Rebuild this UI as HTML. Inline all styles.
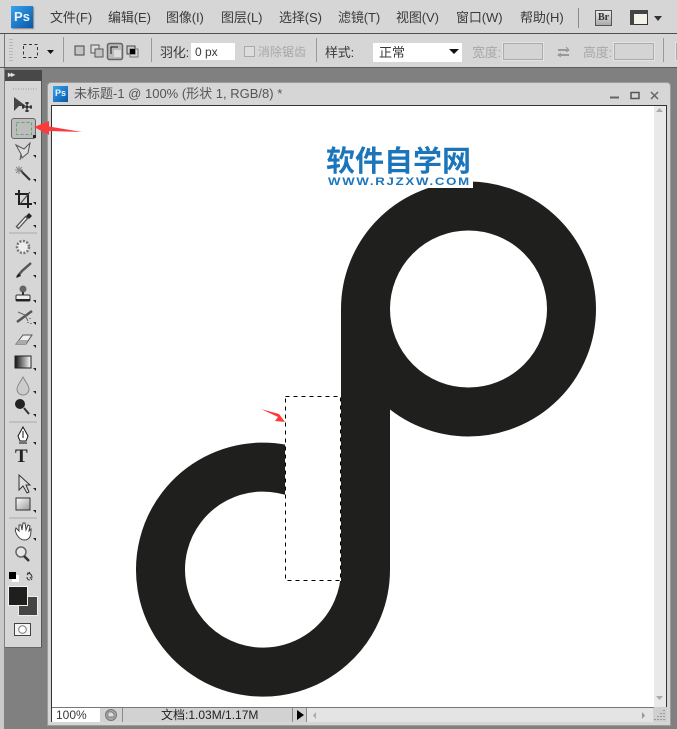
<!DOCTYPE html>
<html><head><meta charset="utf-8">
<style>
html,body{margin:0;padding:0}
body{width:677px;height:729px;overflow:hidden;position:relative;background:#808080;font-family:"Liberation Sans","Noto Sans CJK SC",sans-serif;font-size:13px;color:#3a3a3a}
.a{position:absolute}
.t{position:absolute;white-space:nowrap;line-height:16px}
.g{color:#a8a8a8}
.inp{position:absolute;box-sizing:border-box;background:#d4d4d4;border:1px solid #ababab;box-shadow:0 0 0 1px #e4e4e4}
svg{position:absolute;left:0;top:0;overflow:visible}
</style></head><body>
<!-- menu -->
<div class="a" style="left:0;top:0;width:677px;height:33px;background:#d6d6d6"></div>
<div class="a" style="left:0;top:33px;width:677px;height:1px;background:#4e4e4e"></div>
<div class="a" style="left:0;top:34px;width:677px;height:34px;background:#d6d6d6"></div>
<div class="a" style="left:4px;top:34px;width:1px;height:34px;background:#777"></div>
<div class="a" style="left:0;top:67px;width:677px;height:1px;background:#5c5c5c"></div>
<div class="a" style="left:0;top:68px;width:4px;height:661px;background:#c9c9c9"></div>
<div class="a" style="left:11px;top:6px;width:22px;height:22px;background:linear-gradient(135deg,#35a4ee,#0a57a8);color:#e9f4fc;font:bold 13px/21px 'Liberation Sans',sans-serif;text-align:center;box-shadow:1px 1px 1px #888">Ps</div>
<div class="t" style="left:50px;top:10px;letter-spacing:-.1px">文件(F)</div>
<div class="t" style="left:108px;top:10px;letter-spacing:-.1px">编辑(E)</div>
<div class="t" style="left:166px;top:10px;letter-spacing:-.1px">图像(I)</div>
<div class="t" style="left:221px;top:10px;letter-spacing:-.1px">图层(L)</div>
<div class="t" style="left:279px;top:10px;letter-spacing:-.1px">选择(S)</div>
<div class="t" style="left:338px;top:10px;letter-spacing:-.1px">滤镜(T)</div>
<div class="t" style="left:396px;top:10px;letter-spacing:-.1px">视图(V)</div>
<div class="t" style="left:456px;top:10px;letter-spacing:-.1px">窗口(W)</div>
<div class="t" style="left:520px;top:10px;letter-spacing:-.1px">帮助(H)</div>
<div class="a" style="left:578px;top:8px;width:1px;height:20px;background:#8a8a8a"></div>
<div class="a" style="left:595px;top:10px;width:15px;height:14px;border:1px solid #555;background:linear-gradient(#e8e8e8,#aaa);font:bold 10px/14px 'Liberation Serif',serif;text-align:center;color:#333">Br</div>
<!-- options -->
<div class="t" style="left:160px;top:45px;letter-spacing:-.2px">羽化:</div>
<div class="a" style="left:191px;top:43px;width:44px;height:17px;background:#fff"></div>
<div class="t" style="left:195px;top:44px;font-size:12px">0 px</div>
<div class="a" style="left:244px;top:46px;width:9px;height:9px;border:1px solid #aaa;background:#ddd"></div>
<div class="t g" style="left:258px;top:44px;font-size:12px">消除锯齿</div>
<div class="t" style="left:325px;top:45px;letter-spacing:-.2px">样式:</div>
<div class="a" style="left:373px;top:43px;width:89px;height:19px;background:#fff"></div>
<div class="t" style="left:379px;top:45px">正常</div>
<div class="t g" style="left:472px;top:45px;letter-spacing:-.2px">宽度:</div>
<div class="inp" style="left:503px;top:43px;width:40px;height:17px"></div>
<div class="t g" style="left:583px;top:45px;letter-spacing:-.2px">高度:</div>
<div class="inp" style="left:614px;top:43px;width:40px;height:17px"></div>
<div class="inp" style="left:676px;top:43px;width:10px;height:17px"></div>
<!-- toolbar -->
<div class="a" style="left:5px;top:70px;width:37px;height:11px;background:#484848;color:#ddd;font:bold 8px/10px 'Liberation Sans',sans-serif;letter-spacing:-1px"><span style="margin-left:3px">▸▸</span></div>
<div class="a" style="left:5px;top:81px;width:36px;height:566px;background:#d6d6d6;border-right:1px solid #555"></div>
<div class="a" style="left:5px;top:647px;width:37px;height:1px;background:#666"></div>
<div class="a" style="left:11px;top:118px;width:23px;height:19px;background:#bdbdbd;border:1px solid #666;border-radius:3px"></div>
<div class="t" style="left:15px;top:447px;font:bold 19px/20px 'Liberation Serif',serif;color:#222">T</div>
<!-- document -->
<div class="a" style="left:48px;top:83px;width:622px;height:642px;background:#d6d6d6;border-radius:3px 3px 0 0;box-shadow:0 0 0 1px #9c9c9c"></div>
<div class="a" style="left:53px;top:86px;width:15px;height:16px;background:linear-gradient(135deg,#35a4ee,#0a57a8);color:#e9f4fc;font:bold 9px/15px 'Liberation Sans',sans-serif;text-align:center">Ps</div>
<div class="t" style="left:74px;top:86px;color:#555">未标题-1 @ 100% (形状 1, RGB/8) *</div>
<div class="a" style="left:51px;top:105px;width:616px;height:617px;background:#fff;border:1px solid #333;box-sizing:border-box"></div>
<div class="a" style="left:654px;top:106px;width:12px;height:601px;background:#e9e9e9"></div>
<div class="a" style="left:52px;top:707px;width:614px;height:15px;background:#d2d2d2;border-top:1px solid #777;box-sizing:border-box"></div>
<div class="a" style="left:52px;top:708px;width:48px;height:14px;background:#fff"></div>
<div class="t" style="left:56px;top:708px;font-size:12px;line-height:15px">100%</div>
<div class="a" style="left:122px;top:708px;width:1px;height:14px;background:#8a8a8a"></div>
<div class="a" style="left:292px;top:708px;width:1px;height:14px;background:#8a8a8a"></div>
<div class="a" style="left:306px;top:708px;width:1px;height:14px;background:#8a8a8a"></div>
<div class="a" style="left:307px;top:708px;width:346px;height:14px;background:#e4e4e4"></div>
<div class="t" style="left:161px;top:707px;font-size:12px;color:#222">文档:1.03M/1.17M</div>

<svg width="677" height="729" viewBox="0 0 677 729">
<defs><linearGradient id="gr"><stop offset="0" stop-color="#111"/><stop offset="1" stop-color="#fff"/></linearGradient>
<linearGradient id="sh" x1="0" y1="0" x2="1" y2="1"><stop offset="0" stop-color="#fff"/><stop offset="1" stop-color="#999"/></linearGradient></defs>
<!-- artwork -->
<g fill="none" stroke="#1f1f1e" stroke-width="49">
<circle cx="468.500" cy="309" r="103" stroke-width="49"/>
<path d="M365.500 309V570A102.500 102.500 0 1 1 300 474"/>
</g>
<rect x="285" y="396" width="56" height="185" fill="#fff"/>
<rect x="285.500" y="396.500" width="55" height="184" fill="none" stroke="#000" stroke-dasharray="4 4"/>
<!-- arrows -->
<path d="M34 127L49 121V126.500L82 132L49 131V135Z" fill="#fb3b3b"/>
<path d="M261 409L279 414L285 422L275 421L278 417Z" fill="#fb3b3b"/>
<!-- option icons -->
<rect x="23.500" y="44.500" width="14" height="13" fill="none" stroke="#333" stroke-dasharray="3 2.500"/>
<path d="M47 50h7l-3.500 4z" fill="#111"/>
<g stroke-dasharray="1 2" stroke="#999"><path d="M10 39V62M12 39V62" fill="none"/></g>
<path d="M63.500 37V62M151.500 38V62M316.500 38V62M663.500 38V62" stroke="#999"/>
<rect x="75" y="46" width="9" height="9" fill="#c4c4c4" stroke="#444"/>
<rect x="91" y="45" width="8" height="8" fill="#ddd" stroke="#555"/><rect x="95" y="49" width="8" height="8" fill="#c4c4c4" stroke="#555"/>
<rect x="107.500" y="43.500" width="15" height="16" rx="2" fill="#bbb" stroke="#666" stroke-width="1.500"/>
<path d="M111 54V47H118" fill="none" stroke="#111"/><rect x="114" y="50" width="7" height="7" fill="#ddd"/>
<rect x="127" y="46" width="8" height="8" fill="#ccc" stroke="#444"/><rect x="130" y="49" width="8" height="8" fill="none" stroke="#777"/><rect x="130" y="49" width="5" height="5" fill="#000"/>
<path d="M449 49h10l-5 5z" fill="#111"/>
<path d="M558 50h11M558 55h11" stroke="#999" stroke-width="2"/><path d="M566 47l3 3-3 2M561 53l-3 2 3 2" fill="none" stroke="#999"/>
<!-- film icon -->
<rect x="630.500" y="10.500" width="17" height="14" fill="#f4f1e8" stroke="#333"/>
<rect x="630" y="10" width="18" height="4" fill="#444"/><rect x="630" y="10" width="4" height="15" fill="#444"/>
<path d="M654 16h8l-4 5z" fill="#333"/>
<!-- doc buttons -->
<path d="M610 97.500h9" stroke="#666" stroke-width="2"/>
<rect x="631" y="92.500" width="8" height="6" fill="none" stroke="#555" stroke-width="1.500"/>
<path d="M651 92l7 7M658 92l-7 7" stroke="#666" stroke-width="1.500"/>
<!-- scroll arrows -->
<path d="M656 112h7l-3.500-4zM656 696h7l-3.500 4z" fill="#aaa"/>
<path d="M316 712v7l-3-3.500z" fill="#aaa"/>
<path d="M642 712v7l3-3.500z" fill="#999"/>
<path d="M654 707h13v15h-13z" fill="#cfcfcf"/>
<path d="M664 710v1M661 713v1M664 713v1M658 716v1M661 716v1M664 716v1M655 719v1M658 719v1M661 719v1M664 719v1" stroke="#666"/>
<!-- status icons -->
<circle cx="111" cy="715" r="5.500" fill="#aaa" stroke="#777"/><path d="M108 712h4l2 2v3h-6z" fill="#ddd" stroke="#666" stroke-width=".7"/>
<path d="M297 710v10l7-5z" fill="#000"/>
<!-- toolbar icons -->
<path d="M13 89h24" stroke="#999" stroke-dasharray="1 1.500" fill="none"/>
<path d="M14 97V111L19 106L26 106Z" fill="#444"/>
<path d="M27 102V112M22 107H32" stroke="#111" stroke-width="1.200"/><path d="M25 103h4M25 111h4M23 105v4M31 105v4" stroke="#111"/>
<rect x="16.500" y="122.500" width="15" height="12" fill="none" stroke="#65a56c" stroke-dasharray="3 2"/>
<path d="M33 135h3v3h-3z" fill="#222"/>
<path d="M16 145L24 149L30 143L28 153L22 158L21 154ZM21 154L20 160" fill="#ddd" stroke="#555"/>
<path d="M20 170L30 180" stroke="#333" stroke-width="2"/><path d="M15 170h8M19 166v8M16 167l6 6M22 167l-6 6" stroke="#888"/>
<path d="M19 190V204H32M15 194H28V208" fill="none" stroke="#222" stroke-width="2"/><path d="M20 204L30 192" stroke="#444"/>
<path d="M17 228L27 217" stroke="#555" stroke-width="4"/><path d="M18 227L26 218" stroke="#eee" stroke-width="1.500"/><path d="M26 216l3-3 3 3-3 3z" fill="#222"/>
<path d="M9 233h28M9 422h28M9 518h28" stroke="#aaa"/>
<circle cx="23" cy="247" r="6" fill="#eee" stroke="#777" stroke-dasharray="2 1.500" stroke-width="2.500"/>
<path d="M17 277L22 271L31 263" stroke="#555" stroke-width="2.500" fill="none"/><path d="M16 278l5-2-2-3z" fill="#222"/>
<circle cx="23" cy="289" r="3.500" fill="#666"/><path d="M23 292v4" stroke="#333" stroke-width="2"/><rect x="16" y="295" width="14" height="6" rx="1" fill="#eee" stroke="#333"/><path d="M16 300h14" stroke="#222" stroke-width="2"/>
<path d="M17 322L32 311" stroke="#555" stroke-width="2.500"/><path d="M18 312l7 3 3 6" fill="none" stroke="#666"/><path d="M30 318v1M28 322v1M31 323v1" stroke="#333"/>
<path d="M16 344L23 335H32L26 344Z" fill="#eee" stroke="#555"/><path d="M16 344L19 340H28L26 344Z" fill="#aaa"/>
<rect x="15" y="356" width="16" height="12" fill="url(#gr)" stroke="#222"/>
<path d="M23 377C19 384 17 386 17 389A6 6 0 0 0 29 389C29 386 27 384 23 377Z" fill="#ccc" stroke="#888"/>
<circle cx="20" cy="404" r="5" fill="#222"/><path d="M24 408L29 414" stroke="#333" stroke-width="2"/>
<path d="M23 427L18 436L20 441H26L28 436Z" fill="#fff" stroke="#111"/><path d="M23 431V438M19 443H27" stroke="#111"/>
<path d="M19 475V490L23 486L27 493L29 492L26 485H30Z" fill="#ddd" stroke="#333"/>
<rect x="16" y="498" width="14" height="12" fill="url(#sh)" stroke="#333"/>
<path d="M17 535C15 531 15 530 16 528L19 531L19 525L21 525L22 530L23 523L25 523L26 530L28 525L30 526L29 531L31 529C31 536 30 540 24 540C21 540 19 538 17 535Z" fill="#fff" stroke="#444"/>
<circle cx="21" cy="552" r="5" fill="#e6e6e6" stroke="#666" stroke-width="1.500"/><path d="M24 556L29 561" stroke="#333" stroke-width="2.500"/>
<rect x="12" y="575" width="7" height="7" fill="#fff"/><rect x="9" y="572" width="7" height="7" fill="#000"/>
<path d="M27 573q5 0 5 5M27 575l3 -3M32 580l-2-3M27 577q0 3 3 3" fill="none" stroke="#333"/>
<rect x="18.500" y="596.500" width="19" height="19" fill="#454545" stroke="#eee"/>
<rect x="8.500" y="586.500" width="19" height="19" fill="#1f1f1e" stroke="#f2f2f2"/>
<rect x="14.500" y="623.500" width="16" height="12" fill="#f4f4f4" stroke="#444"/><circle cx="22.500" cy="629.500" r="3.800" fill="#fff" stroke="#777"/>
<!-- corner triangles -->
<path d="M36 158v-3h-3zM36 182v-3h-3zM36 205v-3h-3zM36 228v-3h-3zM36 255v-3h-3zM36 278v-3h-3zM36 303v-3h-3zM36 325v-3h-3zM36 348v-3h-3zM36 371v-3h-3zM36 394v-3h-3zM36 417v-3h-3zM36 445v-3h-3zM36 491v-3h-3zM36 513v-3h-3zM36 541v-3h-3z" fill="#222"/>
</svg>
<!-- logo -->
<div class="a" style="left:327px;top:177px;width:146px;height:11px;background:#fff"></div>
<div class="t" style="left:326px;top:146px;font-weight:bold;font-size:29px;line-height:32px;color:#1a75bb">软件自学网</div>
<div class="t" style="left:328px;top:176px;font-weight:bold;font-size:11px;line-height:13px;color:#1a75bb;letter-spacing:1.450px;transform:scaleX(1.200);transform-origin:0 0">WWW.RJZXW.COM</div>
</body></html>
